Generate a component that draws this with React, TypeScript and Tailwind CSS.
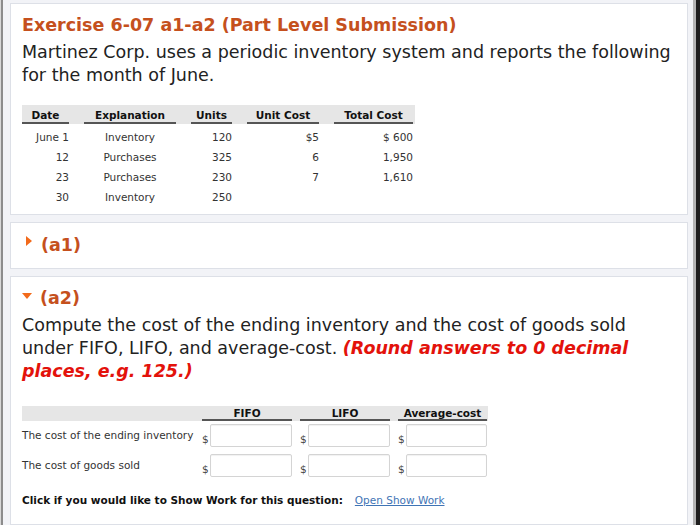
const rows = [
  { date: "June 1", expl: "Inventory", units: "120", unitCost: "$5", total: "$ 600" },
  { date: "12", expl: "Purchases", units: "325", unitCost: "6", total: "1,950" },
  { date: "23", expl: "Purchases", units: "230", unitCost: "7", total: "1,610" },
  { date: "30", expl: "Inventory", units: "250", unitCost: "", total: "" },
];

function Money() {
  return (
    <div className="flex items-end">
      <span className="w-[8px] text-[10.5px] leading-[14px] text-[#444] mb-[1px]">$</span>
      <input className="h-[23px] flex-1 min-w-0 rounded-[2px] border border-[#d4d4d4] bg-white shadow-[inset_0_1px_1px_rgba(0,0,0,0.06)]" />
    </div>
  );
}

export default function App() {
  return (
    <div className="flex w-[700px] min-h-[525px] bg-[#f2f3f7] font-[family-name:'DejaVu_Sans',sans-serif] text-[#222]">
      <div className="w-[1px] bg-[#d8d8d8]" />
      <div className="w-[2px] bg-[#8c8c8c]" />
      <div className="flex flex-1 flex-col gap-[7px] pl-[7px] pr-[5px] pt-[3px]">
        {/* problem statement */}
        <div className="border border-[#dde0e7] bg-white pl-[11px] pt-[9px] pb-[7px]">
          <h1 className="text-[17.5px] font-bold leading-[24px] text-[#c5501d]">
            Exercise 6-07 a1-a2 (Part Level Submission)
          </h1>
          <p className="mt-[4px] w-[662px] text-[17.5px] leading-[23px]">
            Martinez Corp. uses a periodic inventory system and reports the following for the month of June.
          </p>

          <div className="mt-[18px] w-[393px] text-[10.5px] text-[#333]">
            <div className="grid grid-cols-[47px_92px_41px_72px_79px] gap-x-[15px] bg-[#e6e6e6] pt-[3px] font-bold text-[#111]">
              <div className="border-b-2 border-[#555] text-center leading-[14px]">Date</div>
              <div className="border-b-2 border-[#555] text-center leading-[14px]">Explanation</div>
              <div className="border-b-2 border-[#555] text-center leading-[14px]">Units</div>
              <div className="border-b-2 border-[#555] text-center leading-[14px]">Unit Cost</div>
              <div className="border-b-2 border-[#555] text-center leading-[14px]">Total Cost</div>
            </div>
            <div className="mt-[3px]">
              {rows.map((r) => (
                <div key={r.date} className="grid grid-cols-[47px_92px_41px_72px_79px] gap-x-[15px] leading-[20px]">
                  <div className="text-right">{r.date}</div>
                  <div className="text-center">{r.expl}</div>
                  <div className="text-right">{r.units}</div>
                  <div className="text-right">{r.unitCost}</div>
                  <div className="text-right">{r.total}</div>
                </div>
              ))}
            </div>
          </div>
        </div>

        {/* a1 collapsed */}
        <div className="flex h-[47px] items-start gap-[9px] border border-[#dde0e7] bg-white pl-[15px] pt-[10px]">
          <span className="mt-[3px] h-0 w-0 border-y-[5px] border-l-[6px] border-y-transparent border-l-[#f26a1b]" />
          <span className="text-[17.5px] font-bold leading-[24px] text-[#c5501d]">(a1)</span>
        </div>

        {/* a2 expanded */}
        <div className="flex-1 border border-[#dde0e7] bg-white pl-[11px] pt-[9px]">
          <div className="flex items-start gap-[8px]">
            <span className="mt-[7px] h-0 w-0 border-x-[5px] border-t-[6px] border-x-transparent border-t-[#f26a1b]" />
            <span className="text-[17.5px] font-bold leading-[24px] text-[#c5501d]">(a2)</span>
          </div>
          <p className="mt-[4px] w-[650px] text-[17.5px] leading-[23px]">
            Compute the cost of the ending inventory and the cost of goods sold under FIFO, LIFO, and average-cost.{" "}
            <span className="font-bold italic text-[#e3120b]">(Round answers to 0 decimal places, e.g. 125.)</span>
          </p>

          <div className="mt-[23px] w-[466px] text-[10.5px] text-[#333]">
            <div className="grid grid-cols-[172px_90px_90px_89px] gap-x-[8px] bg-[#e6e6e6] pt-[1px] font-bold text-[#111]">
              <div />
              <div className="border-b-2 border-[#555] text-center leading-[12px]">FIFO</div>
              <div className="border-b-2 border-[#555] text-center leading-[12px]">LIFO</div>
              <div className="border-b-2 border-[#555] text-center leading-[12px]">Average-cost</div>
            </div>
            <div className="mt-[3px] grid grid-cols-[172px_90px_90px_89px] gap-x-[8px] gap-y-[7px]">
              <div className="self-center">The cost of the ending inventory</div>
              <Money />
              <Money />
              <Money />
              <div className="self-center">The cost of goods sold</div>
              <Money />
              <Money />
              <Money />
            </div>
          </div>

          <div className="mt-[16px] flex gap-[12px] text-[10.5px]">
            <span className="font-bold text-[#111]">Click if you would like to Show Work for this question:</span>
            <a className="text-[#3f74b5] underline">Open Show Work</a>
          </div>
        </div>
      </div>
      <div className="w-[3px] bg-[#b4b4b4]" />
      <div className="w-[4px] bg-[#1e1e1e]" />
    </div>
  );
}
